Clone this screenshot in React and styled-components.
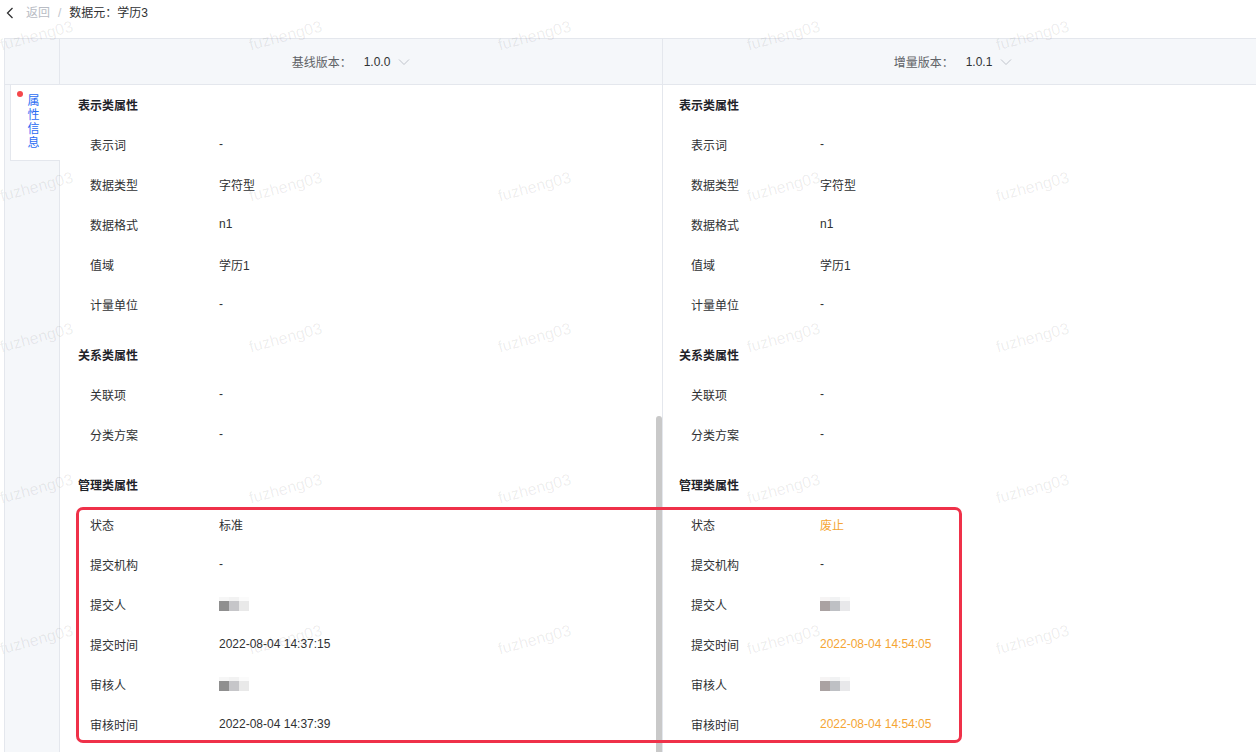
import React from "react";
import styled, { createGlobalStyle } from "styled-components";

const GlobalStyle = createGlobalStyle`
  html, body { margin: 0; padding: 0; background: #fff; overflow: hidden; }
  body {
    font-family: "Liberation Sans", "Noto Sans CJK SC", sans-serif;
    font-size: 12px;
    color: #303133;
  }
  * { box-sizing: border-box; }
`;

const Page = styled.div`
  position: relative;
  width: 1256px;
  height: 752px;
  overflow: hidden;
`;

const Breadcrumb = styled.div`
  height: 38px;
  display: flex;
  align-items: center;
  padding: 0 0 12px 6px;
  line-height: 14px;
`;

const BackBtn = styled.span`
  display: inline-flex;
  width: 10px;
  height: 12px;
  align-items: center;
  margin-right: 10px;
  color: #303133;
`;

const Crumb = styled.span`
  color: ${(p) => (p.$muted ? "#b8bcc4" : "#303133")};
`;

const Sep = styled.span`
  color: #c0c4cc;
  margin: 0 8px;
`;

const Compare = styled.div`
  margin-left: 4px;
  display: grid;
  grid-template-columns: 56px 603px 1fr;
  grid-template-rows: 47px 1fr;
  height: 714px;
`;

const Cell = styled.div`
  border-top: ${(p) => (p.$head ? "1px solid #e4e7ed" : "none")};
  border-bottom: ${(p) => (p.$head ? "1px solid #e4e7ed" : "none")};
  border-right: ${(p) => (p.$noRight ? "none" : "1px solid #e4e7ed")};
  border-left: ${(p) => (p.$first ? "1px solid #e4e7ed" : "none")};
  background: ${(p) => (p.$gray ? "#f5f7fa" : "#fff")};
`;

const HeadCell = styled(Cell)`
  display: flex;
  align-items: center;
  justify-content: center;
`;

const VersionLabel = styled.span`
  color: #606266;
  margin-right: 12px;
`;

const VersionValue = styled.span`
  color: #303133;
  margin-right: 8px;
`;

const Chevron = styled.svg`
  width: 12px;
  height: 8px;
  display: block;
  margin-right: ${(p) => p.$trail}px;
`;

const Sidebar = styled(Cell)`
  padding-left: 5px;
`;

const Tab = styled.div`
  position: relative;
  width: 51px;
  height: 76px;
  margin-right: -1px;
  background: #fff;
  border-left: 1px solid #e4e7ed;
  border-bottom: 1px solid #e4e7ed;
  padding: 9px 5px 0 0;
  display: flex;
  flex-direction: column;
  align-items: center;
  color: #2b6cf3;
  line-height: 14px;
`;

const Dot = styled.span`
  position: absolute;
  left: 6px;
  top: 6px;
  width: 6px;
  height: 6px;
  border-radius: 50%;
  background: #f5474b;
`;

const Panel = styled(Cell)`
  position: relative;
  padding-left: ${(p) => p.$pad}px;
`;

const Section = styled.section`
  margin-bottom: 10px;
`;

const SectionTitle = styled.div`
  height: 40px;
  padding-bottom: 2px;
  display: flex;
  align-items: center;
  font-weight: 700;
  color: #1f2329;
`;

const Row = styled.div`
  height: 40px;
  padding: 0 0 2px 12px;
  display: flex;
  align-items: center;
`;

const Label = styled.span`
  width: 129px;
  flex: none;
  color: #303133;
`;

const Value = styled.span`
  color: ${(p) => (p.$changed ? "#f5a534" : "#303133")};
`;

const Blur = styled.span`
  display: inline-flex;
  flex-direction: column;
  filter: blur(0.4px);
`;

const BlurLine = styled.span`
  display: flex;
`;

const BlurBlock = styled.span`
  width: 10px;
  height: ${(p) => p.$h}px;
  background: ${(p) => p.$c};
`;

const Thumb = styled.div`
  position: absolute;
  right: 0;
  top: 331px;
  width: 6px;
  height: 420px;
  border-radius: 3px 3px 0 0;
  background: #c9c9c9;
`;

const Highlight = styled.div`
  position: absolute;
  left: 76px;
  top: 507px;
  width: 886px;
  height: 236px;
  border: 3px solid #ef3149;
  border-radius: 7px;
  pointer-events: none;
`;

const Watermarks = styled.div`
  position: absolute;
  left: -88px;
  top: -40px;
  display: grid;
  grid-template-columns: repeat(5, 249px);
  grid-auto-rows: 151px;
  pointer-events: none;
`;

const Mark = styled.div`
  display: flex;
  align-items: center;
  justify-content: center;
  font-family: "Liberation Sans", sans-serif;
  font-size: 16px;
  color: rgba(0, 0, 0, 0.075);
  transform: rotate(-15deg);
`;

const sections = [
  {
    title: "表示类属性",
    rows: [
      ["表示词", "-", "-"],
      ["数据类型", "字符型", "字符型"],
      ["数据格式", "n1", "n1"],
      ["值域", "学历1", "学历1"],
      ["计量单位", "-", "-"],
    ],
  },
  {
    title: "关系类属性",
    rows: [
      ["关联项", "-", "-"],
      ["分类方案", "-", "-"],
    ],
  },
  {
    title: "管理类属性",
    rows: [
      ["状态", "标准", "废止", true],
      ["提交机构", "-", "-"],
      ["提交人", "@blur", "@blur"],
      ["提交时间", "2022-08-04 14:37:15", "2022-08-04 14:54:05", true],
      ["审核人", "@blur", "@blur"],
      ["审核时间", "2022-08-04 14:37:39", "2022-08-04 14:54:05", true],
    ],
  },
];

const blurColors = [
  [["#f6f6f6", "#f2f2f2", "#fbfbfb"], ["#8f8f8f", "#c6c6c9", "#e9e9e9"]],
  [["#f6f4f4", "#f1f2f3", "#fafafa"], ["#aaa2a2", "#bec0c4", "#e8e8ea"]],
];

function BlurredName({ side }) {
  return (
    <Blur>
      {blurColors[side].map((line, li) => (
        <BlurLine key={li}>
          {line.map((c, i) => (
            <BlurBlock key={i} $c={c} $h={li === 0 ? 4 : 10} />
          ))}
        </BlurLine>
      ))}
    </Blur>
  );
}

function ChevronDown({ trail }) {
  return (
    <Chevron viewBox="0 0 12 8" fill="none" $trail={trail}>
      <path d="M1 1.5 L6 6.5 L11 1.5" stroke="#c0c4cc" strokeWidth="1" />
    </Chevron>
  );
}

function Column({ side }) {
  return sections.map((s) => (
    <Section key={s.title}>
      <SectionTitle>{s.title}</SectionTitle>
      {s.rows.map((r) => {
        const v = r[side + 1];
        return (
          <Row key={r[0]}>
            <Label>{r[0]}</Label>
            {v === "@blur" ? (
              <BlurredName side={side} />
            ) : (
              <Value $changed={side === 1 && r[3]}>{v}</Value>
            )}
          </Row>
        );
      })}
    </Section>
  ));
}

export default function App() {
  return (
    <>
      <GlobalStyle />
      <Page>
        <Breadcrumb>
          <BackBtn>
            <svg width="8" height="12" viewBox="0 0 8 12" fill="none">
              <path d="M6.5 1 L1.5 6 L6.5 11" stroke="#303133" strokeWidth="1.3" />
            </svg>
          </BackBtn>
          <Crumb $muted>返回</Crumb>
          <Sep>/</Sep>
          <Crumb>数据元：学历3</Crumb>
        </Breadcrumb>
        <Compare>
          <Cell $head $first $gray />
          <HeadCell $head $gray>
            <VersionLabel>基线版本：</VersionLabel>
            <VersionValue>1.0.0</VersionValue>
            <ChevronDown trail={20} />
          </HeadCell>
          <HeadCell $head $gray $noRight>
            <VersionLabel>增量版本：</VersionLabel>
            <VersionValue>1.0.1</VersionValue>
            <ChevronDown trail={13} />
          </HeadCell>
          <Sidebar $first $gray>
            <Tab>
              <Dot />
              <span>属</span>
              <span>性</span>
              <span>信</span>
              <span>息</span>
            </Tab>
          </Sidebar>
          <Panel $pad={18}>
            <Column side={0} />
            <Thumb />
          </Panel>
          <Panel $pad={16} $noRight>
            <Column side={1} />
          </Panel>
        </Compare>
        <Highlight />
        <Watermarks>
          {Array.from({ length: 30 }).map((_, i) => (
            <Mark key={i}>fuzheng03</Mark>
          ))}
        </Watermarks>
      </Page>
    </>
  );
}
